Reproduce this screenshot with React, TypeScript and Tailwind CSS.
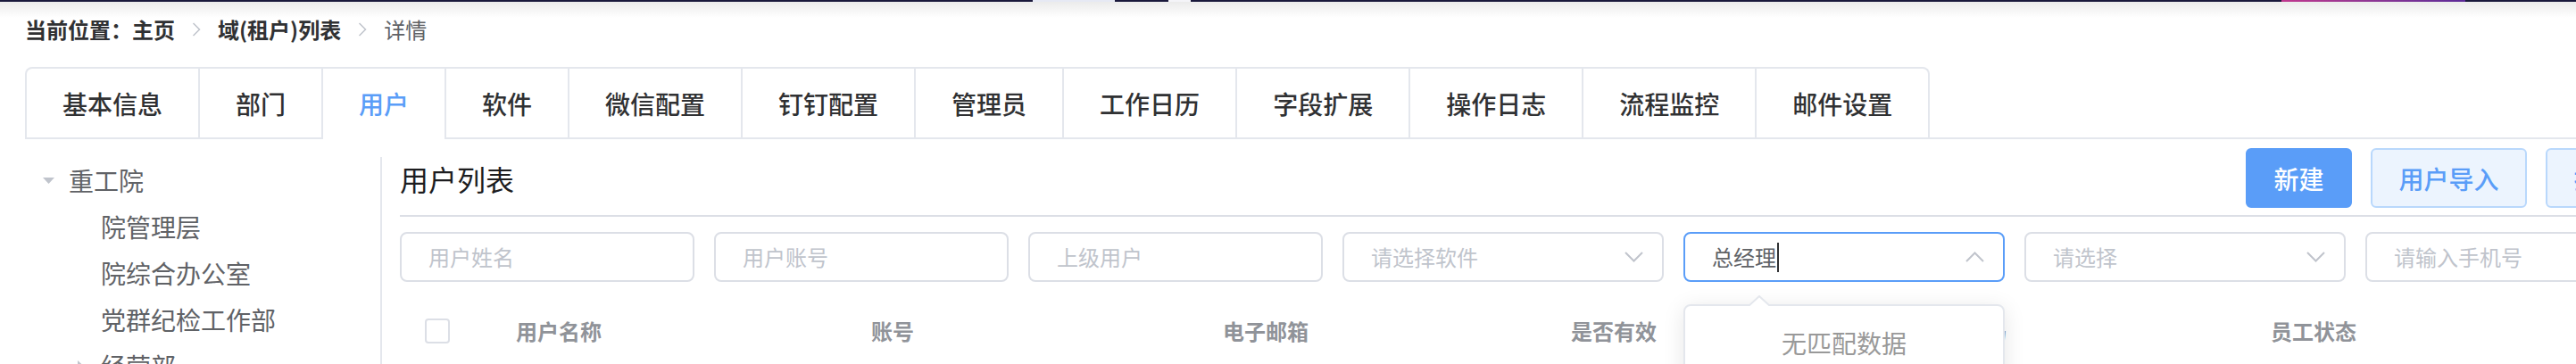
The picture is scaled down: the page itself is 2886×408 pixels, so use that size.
import React from "react";

const tabs = [
  "基本信息",
  "部门",
  "用户",
  "软件",
  "微信配置",
  "钉钉配置",
  "管理员",
  "工作日历",
  "字段扩展",
  "操作日志",
  "流程监控",
  "邮件设置",
];

function Sep() {
  return (
    <svg width="10" height="16" viewBox="0 0 10 16" className="mx-[19px] shrink-0">
      <path d="M1.5 1 L8.5 8 L1.5 15" fill="none" stroke="#c0c4cc" strokeWidth="1.5" />
    </svg>
  );
}

function Chevron({ up }: { up?: boolean }) {
  return (
    <svg width="21" height="12" viewBox="0 0 21 12" className="shrink-0">
      <path
        d={up ? "M1 11 L10.5 1.5 L20 11" : "M1 1 L10.5 10.5 L20 1"}
        fill="none"
        stroke="#c0c4cc"
        strokeWidth="2"
      />
    </svg>
  );
}

function TreeRow({
  level,
  label,
  caret,
}: {
  level: number;
  label: string;
  caret?: "down" | "right";
}) {
  return (
    <div
      className={`flex h-[52px] items-center ${level === 0 ? "pl-[19px]" : "pl-[55px]"}`}
    >
      <div className="flex h-[14px] w-[14px] items-center justify-center">
        {caret === "down" && (
          <svg width="13" height="7" viewBox="0 0 13 7">
            <path d="M0 0 L13 0 L6.5 7 Z" fill="#c0c4cc" />
          </svg>
        )}
        {caret === "right" && (
          <svg width="7" height="13" viewBox="0 0 7 13">
            <path d="M0 0 L7 6.5 L0 13 Z" fill="#c0c4cc" />
          </svg>
        )}
      </div>
      <span className="ml-[16px] whitespace-nowrap text-[28px] leading-[36px] text-[#606266]">
        {label}
      </span>
    </div>
  );
}

function TextInput({ placeholder, w }: { placeholder: string; w: string }) {
  return (
    <div
      className={`${w} flex h-[56px] shrink-0 items-center rounded-[8px] border-2 border-[#dcdfe6] bg-white pl-[30px]`}
    >
      <span className="whitespace-nowrap text-[24px] leading-[30px] text-[#c0c4cc]">
        {placeholder}
      </span>
    </div>
  );
}

function SelectBox({ placeholder }: { placeholder: string }) {
  return (
    <div className="flex h-[56px] w-[360px] shrink-0 items-center justify-between rounded-[8px] border-2 border-[#dcdfe6] bg-white pl-[30px] pr-[21px]">
      <span className="whitespace-nowrap text-[24px] leading-[30px] text-[#c0c4cc]">
        {placeholder}
      </span>
      <Chevron />
    </div>
  );
}

export default function App() {
  return (
    <div className="h-[408px] w-[2886px] overflow-hidden bg-white font-['Noto_Sans_CJK_SC','Noto_Sans',sans-serif]">
      <div className="w-[3100px]">
        {/* top dark header edge */}
        <div className="flex h-[2px]">
          <div className="w-[1157px] bg-[#19183b]" />
          <div className="w-[92px] bg-[#e6e9f4]" />
          <div className="w-[60px] bg-[#19183b]" />
          <div className="w-[25px] bg-[#f4f4f8]" />
          <div className="w-[1222px] bg-[#19183b]" />
          <div className="w-[206px] bg-gradient-to-r from-[#c0378e] to-[#5c2a98]" />
          <div className="flex-1 bg-[#19183b]" />
        </div>
        {/* header shadow */}
        <div className="h-[18px] bg-gradient-to-b from-[#ebebeb] to-white" />

        <div className="pl-[28px]">
          {/* breadcrumb */}
          <div className="flex h-[26px] items-center text-[24px] leading-[26px]">
            <span className="whitespace-nowrap font-bold text-[#303133]">当前位置：主页</span>
            <Sep />
            <span className="whitespace-nowrap font-bold text-[#303133]">域(租户)列表</span>
            <Sep />
            <span className="whitespace-nowrap text-[#606266]">详情</span>
          </div>

          {/* tabs */}
          <div className="mt-[29px] flex border-b-2 border-[#e4e7ed]">
            <div className="flex h-[79px] rounded-t-[8px] border-2 border-b-0 border-[#e4e7ed]">
              {tabs.map((t, i) => {
                const active = t === "用户";
                return (
                  <div
                    key={t}
                    className={`relative flex h-full items-center whitespace-nowrap px-[40px] text-[28px] font-medium leading-[36px] ${
                      i > 0 ? "border-l-2 border-[#e4e7ed]" : ""
                    } ${
                      active
                        ? "text-[#5a9df8] after:absolute after:inset-x-0 after:bottom-[-2px] after:h-[2px] after:bg-white after:content-['']"
                        : "text-[#303133]"
                    }`}
                  >
                    {t}
                  </div>
                );
              })}
            </div>
          </div>

          {/* body */}
          <div className="flex">
            {/* tree */}
            <div className="mt-[20px] h-[300px] w-[400px] shrink-0 border-r-2 border-[#e4e7ed]">
              <TreeRow level={0} label="重工院" caret="down" />
              <TreeRow level={1} label="院管理层" />
              <TreeRow level={1} label="院综合办公室" />
              <TreeRow level={1} label="党群纪检工作部" />
              <TreeRow level={1} label="经营部" caret="right" />
            </div>

            {/* right pane */}
            <div className="mt-[10px] w-[2599px] shrink-0 pl-[20px]">
              <div className="flex items-center border-b-2 border-[#dcdfe6] pb-[8px]">
                <div className="flex h-[67px] items-center">
                  <span className="whitespace-nowrap text-[32px] leading-[40px] text-[#1d1d1f]">用户列表</span>
                </div>
                <div className="ml-auto flex gap-[21px]">
                  <button className="flex h-[67px] w-[119px] items-center justify-center rounded-[6px] border-2 border-[#5a9df8] bg-[#5a9df8] text-[28px] font-medium leading-[36px] text-white">
                    新建
                  </button>
                  <button className="flex h-[67px] w-[175px] items-center justify-center rounded-[6px] border-2 border-[#b9d8fc] bg-[#ecf4fe] text-[28px] font-medium leading-[36px] text-[#5a9df8]">
                    用户导入
                  </button>
                  <button className="flex h-[67px] w-[175px] items-center justify-center rounded-[6px] border-2 border-[#b9d8fc] bg-[#ecf4fe] text-[28px] font-medium leading-[36px] text-[#5a9df8]">
                    批量导出
                  </button>
                </div>
              </div>

              {/* filters */}
              <div className="mt-[17px] flex gap-[22px]">
                <TextInput placeholder="用户姓名" w="w-[330px]" />
                <TextInput placeholder="用户账号" w="w-[330px]" />
                <TextInput placeholder="上级用户" w="w-[330px]" />
                <SelectBox placeholder="请选择软件" />
                <div className="relative w-[360px] shrink-0">
                  <div className="flex h-[56px] items-center justify-between rounded-[8px] border-2 border-[#5a9df8] bg-white pl-[30px] pr-[21px]">
                    <div className="flex items-center">
                      <span className="whitespace-nowrap text-[24px] leading-[30px] text-[#606266]">总经理</span>
                      <span className="ml-[1px] h-[33px] w-[2px] bg-[#303133]" />
                    </div>
                    <Chevron up />
                  </div>
                  {/* dropdown popover */}
                  <div className="absolute left-0 top-[81px] z-10 h-[90px] w-[360px] rounded-[8px] border-2 border-[#e4e7ed] bg-white shadow-[0_4px_24px_rgba(0,0,0,0.1)]">
                    <svg
                      width="24"
                      height="12"
                      viewBox="0 0 24 12"
                      className="absolute left-[71px] top-[-12px]"
                    >
                      <path d="M0 12 L12 1 L24 12" fill="white" stroke="#e4e7ed" strokeWidth="2" />
                    </svg>
                    <div className="pt-[20px] text-center text-[28px] leading-[42px] text-[#999999]">
                      无匹配数据
                    </div>
                  </div>
                </div>
                <SelectBox placeholder="请选择" />
                <TextInput placeholder="请输入手机号" w="w-[330px]" />
              </div>

              {/* table header */}
              <div className="mt-[20px] grid h-[70px] grid-cols-[84px_188px_560px_276px_504px_280px_504px] items-center text-[24px] font-bold leading-[30px] text-[#909399]">
                <div className="flex justify-center">
                  <div className="h-[28px] w-[28px] rounded-[4px] border-2 border-[#dcdfe6] bg-white" />
                </div>
                <div className="text-center whitespace-nowrap">用户名称</div>
                <div className="text-center whitespace-nowrap">账号</div>
                <div className="text-center whitespace-nowrap">电子邮箱</div>
                <div className="text-center whitespace-nowrap">是否有效</div>
                <div className="text-center whitespace-nowrap">手机号码</div>
                <div className="text-center whitespace-nowrap">员工状态</div>
              </div>
            </div>
          </div>
        </div>
      </div>
    </div>
  );
}
